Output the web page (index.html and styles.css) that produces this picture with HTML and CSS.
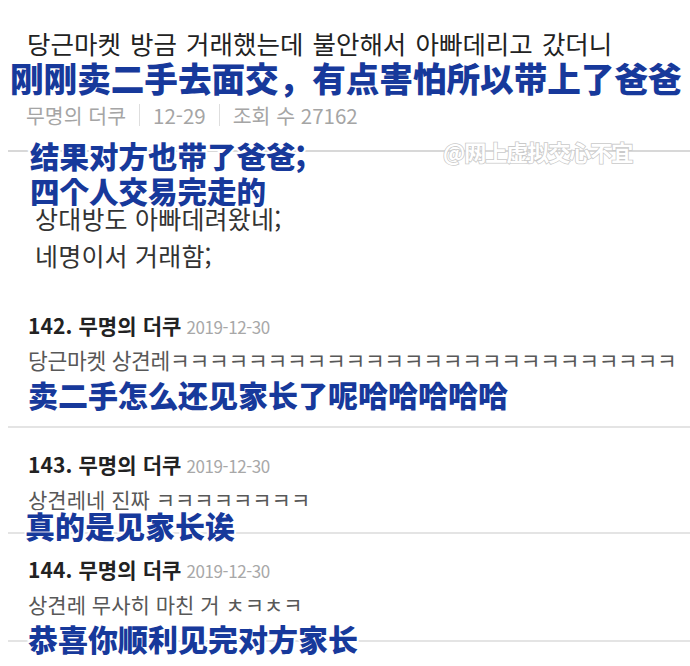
FILE: index.html
```html
<!DOCTYPE html>
<html lang="ko">
<head>
<meta charset="utf-8">
<link rel="stylesheet" href="styles.css">
</head>
<body>
<div class="page">
  <section class="post">
    <h1 class="title">당근마켓 방금 거래했는데 불안해서 아빠데리고 갔더니</h1>
    <div class="cap cap-first">刚刚卖二手去面交，有点害怕所以带上了爸爸</div>
    <div class="meta">
      <span>무명의 더쿠</span><i class="sep"></i><span>12-29</span><i class="sep"></i><span>조회 수 27162</span>
    </div>
  </section>
  <section class="body">
    <div class="cap cap-body">结果对方也带了爸爸;<br>四个人交易完走的</div>
    <p class="kr">상대방도 아빠데려왔네;</p>
    <p class="kr kr2">네명이서 거래함;</p>
  </section>
  <div class="watermark">@网上虚拟交心不宜</div>
  <section class="comment c142">
    <div class="chead"><b>142. 무명의 더쿠</b><span class="date">2019-12-30</span></div>
    <p class="ctext ctext-long">당근마켓 상견레ㅋㅋㅋㅋㅋㅋㅋㅋㅋㅋㅋㅋㅋㅋㅋㅋㅋㅋㅋㅋㅋㅋㅋㅋㅋㅋ</p>
    <div class="cap cap-c">卖二手怎么还见家长了呢哈哈哈哈哈</div>
  </section>
  <section class="comment c143">
    <div class="chead"><b>143. 무명의 더쿠</b><span class="date">2019-12-30</span></div>
    <p class="ctext">상견레네 진짜 ㅋㅋㅋㅋㅋㅋㅋㅋ</p>
    <div class="cap cap-c cap-tight">真的是见家长诶</div>
  </section>
  <section class="comment c144">
    <div class="chead"><b>144. 무명의 더쿠</b><span class="date">2019-12-30</span></div>
    <p class="ctext">상견레 무사히 마친 거 ㅊㅋㅊㅋ</p>
    <div class="cap cap-c">恭喜你顺利见完对方家长</div>
  </section>
  <section class="comment c145">
    <div class="chead"><b>145. 무명의 더쿠</b><span class="date">2019-12-30</span></div>
  </section>
</div>
</body>
</html>
```

FILE: styles.css
```css
html, body {
  margin: 0;
  padding: 0;
  background: #fff;
}
.page {
  position: relative;
  width: 690px;
  height: 666px;
  overflow: hidden;
  font-family: "Noto Sans CJK KR", "Noto Sans CJK SC", sans-serif;
  color: #222;
}
p { margin: 0; }
.post {
  margin-left: 8px;
  padding-top: 27px;
  height: 123px;
  border-bottom: 2px solid #d8d8d8;
}
.title {
  margin: 0 0 0 19px;
  font-size: 25.5px;
  font-weight: 400;
  line-height: 31px;
  color: #222;
  letter-spacing: 0;
  word-spacing: 2px;
  white-space: nowrap;
}
.cap {
  font-family: "Noto Sans CJK SC", sans-serif;
  font-weight: 900;
  color: #17399b;
  -webkit-text-stroke: 4px #fff;
  paint-order: stroke fill;
  white-space: nowrap;
}
.cap-first {
  margin-left: 2px;
  font-size: 33.6px;
  line-height: 40px;
}
.meta {
  margin-left: 18px;
  margin-top: 4px;
  display: flex;
  align-items: center;
  font-size: 20.5px;
  line-height: 26px;
  color: #a5a5a5;
}
.sep {
  display: inline-block;
  width: 1px;
  height: 22px;
  background: #dedede;
  margin: 0 13px;
}
.body {
  margin-top: -14px;
  padding-left: 30px;
  height: 152px;
}
.cap-body {
  font-size: 29.5px;
  line-height: 35px;
}
.kr {
  margin-left: 5px;
  margin-top: -5px;
  font-size: 25px;
  line-height: 30px;
  color: #333;
  letter-spacing: 0.2px;
}
.kr2 { margin-top: 6.5px; }
.watermark {
  position: absolute;
  left: 443px;
  top: 137px;
  font-family: "Noto Sans CJK SC", sans-serif;
  font-weight: 700;
  font-size: 22px;
  line-height: 28px;
  color: #fff;
  letter-spacing: -1px;
  -webkit-text-stroke: 1.6px #c9c9c9;
  paint-order: stroke fill;
}
.comment {
  padding-left: 20px;
  margin-left: 8px;
  border-bottom: 2px solid #e4e4e4;
}
.chead {
  display: flex;
  align-items: baseline;
  gap: 5px;
  height: 30px;
  line-height: 30px;
  white-space: nowrap;
}
.chead b {
  font-size: 21px;
  font-weight: 700;
  color: #222;
  letter-spacing: 0.1px;
}
.date {
  font-size: 17px;
  color: #a8a8a8;
  letter-spacing: -0.4px;
}
.ctext {
  font-size: 21px;
  line-height: 34px;
  color: #585858;
  margin-top: 3px;
  white-space: nowrap;
}
.ctext-long {
  font-size: 21.5px;
  letter-spacing: -0.3px;
}
.cap-c {
  font-size: 30px;
  line-height: 36px;
  margin-top: -1.5px;
}
.cap-tight {
  margin-top: -9px;
  margin-left: -3px;
}
.c142 {
  padding-top: 20px;
  height: 116px;
}
.c143 {
  padding-top: 21px;
  height: 83px;
}
.c144 {
  padding-top: 20px;
  height: 86px;
}
.c145 {
  padding-top: 18px;
  height: 40px;
  border-bottom: none;
}
```
